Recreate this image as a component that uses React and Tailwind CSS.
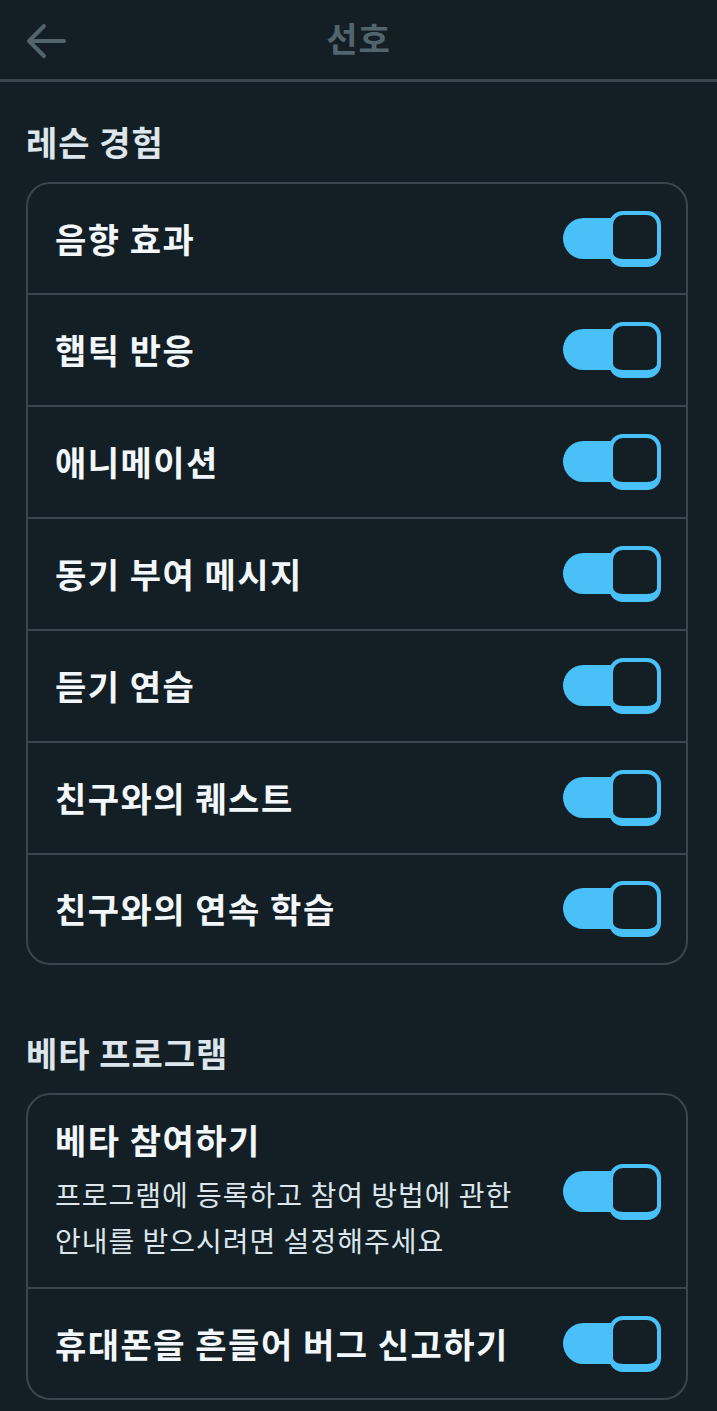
import React from "react";

const FONT = { fontFamily: '"Noto Sans CJK KR", "Noto Sans", sans-serif' };

function Toggle() {
  return (
    <div className="relative w-[98px] h-[56px] shrink-0">
      <div className="absolute left-0 top-[7px] w-[60px] h-[41px] rounded-l-full bg-[#49c0f8]" />
      <div className="absolute right-0 top-0 w-[52px] h-[56px] rounded-[14px] border-[4px] border-b-[8px] border-[#49c0f8] bg-[#131f24]" />
    </div>
  );
}

function Row({ label, first, last }) {
  return (
    <div
      className={
        "flex items-center justify-between pl-[27px] pr-[25px] " +
        (first ? "h-[111px] " : last ? "h-[108px] " : "h-[112px] ") +
        (last ? "" : "border-b-2 border-[#37464f]")
      }
    >
      <span className="text-[34px] font-bold text-[#f1f7fb] tracking-[1.5px] leading-none">
        {label}
      </span>
      <Toggle />
    </div>
  );
}

export default function App() {
  const lesson = [
    "음향 효과",
    "햅틱 반응",
    "애니메이션",
    "동기 부여 메시지",
    "듣기 연습",
    "친구와의 퀘스트",
    "친구와의 연속 학습",
  ];
  return (
    <div className="w-[717px] min-h-[1411px] bg-[#131f24]" style={FONT}>
      <div className="relative h-[82px] border-b-[3px] border-[#37464f] flex items-center justify-center">
        <div className="absolute left-[26px] top-[22px]">
          <svg width="40" height="38" viewBox="0 0 40 38" fill="none">
            <path
              d="M38 19H4M18 4L3 19l15 15"
              stroke="#52656d"
              strokeWidth="4"
              strokeLinecap="round"
              strokeLinejoin="round"
            />
          </svg>
        </div>
        <span className="text-[34px] font-bold text-[#52656d] leading-none tracking-[1px] -mt-[4px]">
          선호
        </span>
      </div>

      <div className="pl-[26px] pr-[29px]">
        <h2 className="mt-[40px] mb-[20px] text-[34px] font-bold text-[#dce6ec] tracking-[1px] leading-[40px]">
          레슨 경험
        </h2>
        <div className="border-2 border-[#37464f] rounded-[24px] overflow-hidden">
          {lesson.map((l, i) => (
            <Row key={l} label={l} first={i === 0} last={i === lesson.length - 1} />
          ))}
        </div>

        <h2 className="mt-[68px] mb-[20px] text-[34px] font-bold text-[#dce6ec] tracking-[1px] leading-[40px]">
          베타 프로그램
        </h2>
        <div className="border-2 border-[#37464f] rounded-[24px] overflow-hidden">
          <div className="flex items-center justify-between pl-[27px] pr-[25px] pt-[25px] pb-[24px] border-b-2 border-[#37464f]">
            <div>
              <div className="text-[34px] font-bold text-[#f1f7fb] tracking-[1.5px] leading-[40px]">
                베타 참여하기
              </div>
              <div className="mt-[11px] text-[28px] text-[#dce6ec] tracking-[1px] leading-[46px]">
                프로그램에 등록하고 참여 방법에 관한
                <br />
                안내를 받으시려면 설정해주세요
              </div>
            </div>
            <Toggle />
          </div>
          <div className="flex items-center justify-between h-[109px] pl-[27px] pr-[25px]">
            <span className="text-[34px] font-bold text-[#f1f7fb] tracking-[1.5px] leading-none">
              휴대폰을 흔들어 버그 신고하기
            </span>
            <Toggle />
          </div>
        </div>
      </div>
    </div>
  );
}
